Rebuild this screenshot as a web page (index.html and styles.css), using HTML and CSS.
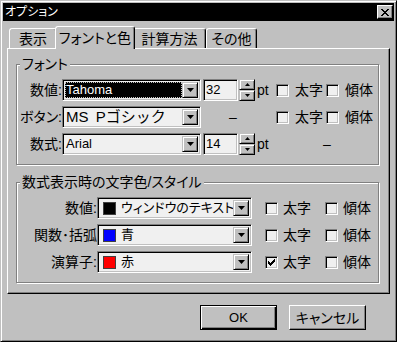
FILE: index.html
```html
<!DOCTYPE html>
<html lang="ja">
<head>
    <meta charset="UTF-8">
    <title>オプション</title>
    <link rel="stylesheet" href="styles.css">
</head>
<body>

<div class="window">
    <div class="titlebar">
        <span class="titlebar__text">オプション</span>
        <button class="titlebar__close" aria-label="閉じる">
            <svg width="8" height="7" viewBox="0 0 8 7" shape-rendering="crispEdges">
                <path d="M0 0h2v1h-2zM6 0h2v1h-2zM1 1h2v1h-2zM5 1h2v1h-2zM2 2h4v1h-4zM3 3h2v1h-2zM2 4h4v1h-4zM1 5h2v1h-2zM5 5h2v1h-2zM0 6h2v1h-2zM6 6h2v1h-2z" fill="#000"/>
            </svg>
        </button>
    </div>

    <div class="dialog">
        <!-- Tabs -->
        <div class="tabs">
            <div class="tab tab--show">表示</div>
            <div class="tab tab--active">フォントと色</div>
            <div class="tab tab--calc">計算方法</div>
            <div class="tab tab--other">その他</div>
        </div>

        <div class="panel">
            <!-- Font group -->
            <fieldset class="group">
                <legend class="group__title">フォント</legend>
                <div class="font-grid">
                    <span class="label">数値:</span>
                    <div class="combo">
                        <span class="combo__value combo__value--focus">Tahoma</span>
                        <span class="combo__arrow"><svg width="7" height="4" viewBox="0 0 7 4"><path d="M0 0h7L3.5 4z"/></svg></span>
                    </div>
                    <div class="spin">
                        <div class="edit">32</div>
                        <div class="spin__buttons">
                            <span class="spin__btn"><svg width="5" height="3" viewBox="0 0 5 3"><path d="M2.5 0L5 3H0z"/></svg></span>
                            <span class="spin__btn"><svg width="5" height="3" viewBox="0 0 5 3"><path d="M0 0h5L2.5 3z"/></svg></span>
                        </div>
                        <span class="unit">pt</span>
                    </div>
                    <label class="check"><span class="check__box"></span>太字</label>
                    <label class="check"><span class="check__box"></span>傾体</label>

                    <span class="label">ボタン:</span>
                    <div class="combo">
                        <span class="combo__value combo__value--wide">MS Pゴシック</span>
                        <span class="combo__arrow"><svg width="7" height="4" viewBox="0 0 7 4"><path d="M0 0h7L3.5 4z"/></svg></span>
                    </div>
                    <span class="dash dash--size">–</span>
                    <label class="check"><span class="check__box"></span>太字</label>
                    <label class="check"><span class="check__box"></span>傾体</label>

                    <span class="label">数式:</span>
                    <div class="combo">
                        <span class="combo__value">Arial</span>
                        <span class="combo__arrow"><svg width="7" height="4" viewBox="0 0 7 4"><path d="M0 0h7L3.5 4z"/></svg></span>
                    </div>
                    <div class="spin">
                        <div class="edit">14</div>
                        <div class="spin__buttons">
                            <span class="spin__btn"><svg width="5" height="3" viewBox="0 0 5 3"><path d="M2.5 0L5 3H0z"/></svg></span>
                            <span class="spin__btn"><svg width="5" height="3" viewBox="0 0 5 3"><path d="M0 0h5L2.5 3z"/></svg></span>
                        </div>
                        <span class="unit">pt</span>
                    </div>
                    <span class="dash dash--style">–</span>
                </div>
            </fieldset>

            <!-- Color / style group -->
            <fieldset class="group group--colors">
                <legend class="group__title">数式表示時の文字色/スタイル</legend>
                <div class="color-grid">
                    <span class="label">数値:</span>
                    <div class="combo">
                        <span class="combo__value"><span class="swatch" style="background: #000000;"></span>ウィンドウのテキスト</span>
                        <span class="combo__arrow"><svg width="7" height="4" viewBox="0 0 7 4"><path d="M0 0h7L3.5 4z"/></svg></span>
                    </div>
                    <label class="check check--first"><span class="check__box"></span>太字</label>
                    <label class="check"><span class="check__box"></span>傾体</label>

                    <span class="label">関数･括弧</span>
                    <div class="combo">
                        <span class="combo__value"><span class="swatch" style="background: #0000ff;"></span>青</span>
                        <span class="combo__arrow"><svg width="7" height="4" viewBox="0 0 7 4"><path d="M0 0h7L3.5 4z"/></svg></span>
                    </div>
                    <label class="check check--first"><span class="check__box"></span>太字</label>
                    <label class="check"><span class="check__box"></span>傾体</label>

                    <span class="label">演算子:</span>
                    <div class="combo">
                        <span class="combo__value"><span class="swatch" style="background: #ff0000;"></span>赤</span>
                        <span class="combo__arrow"><svg width="7" height="4" viewBox="0 0 7 4"><path d="M0 0h7L3.5 4z"/></svg></span>
                    </div>
                    <label class="check check--first">
                        <span class="check__box">
                            <svg width="7" height="7" viewBox="0 0 7 7" shape-rendering="crispEdges"><path d="M6 0h1v3h-1zM5 1h1v3h-1zM4 2h1v3h-1zM3 3h1v3h-1zM2 4h1v3h-1zM1 3h1v3h-1zM0 2h1v3h-1z"/></svg>
                        </span>太字
                    </label>
                    <label class="check"><span class="check__box"></span>傾体</label>
                </div>
            </fieldset>
        </div>

        <div class="buttons">
            <button class="button button--default">OK</button>
            <button class="button">キャンセル</button>
        </div>
    </div>
</div>

</body>
</html>
```

FILE: styles.css
```css
/* General styles */
* {
    box-sizing: border-box;
}
body {
    margin: 0;
    background: #c0c0c0;
    font-family: "Liberation Sans", "Noto Sans CJK JP", sans-serif;
    font-size: 14px;
    line-height: 16px;
    color: #000;
    font-feature-settings: "palt";
}
button {
    font: inherit;
    color: inherit;
}

/* Window frame */
.window {
    width: 397px;
    height: 342px;
    background: #c0c0c0;
    border: 1px solid;
    border-color: #c0c0c0 #000 #000 #c0c0c0;
    box-shadow: inset 1px 1px #fff, inset -1px -1px #808080;
    padding: 2px;
    display: flex;
    flex-direction: column;
}
.titlebar {
    height: 18px;
    flex: none;
    background: #000;
    color: #fff;
    display: flex;
    align-items: center;
    justify-content: space-between;
    padding: 0 1px 0 2px;
    font-size: 12px;
}
.titlebar__close {
    width: 16px;
    height: 14px;
    padding: 0;
    background: #c0c0c0;
    border: 1px solid;
    border-color: #fff #000 #000 #fff;
    box-shadow: inset -1px -1px #808080;
    display: flex;
    align-items: center;
    justify-content: center;
}
.titlebar__close svg {
    display: block;
}

/* Dialog body */
.dialog {
    flex: 1;
    padding: 5px 4px 0;
    display: flex;
    flex-direction: column;
}

/* Tabs */
.tabs {
    display: flex;
    align-items: flex-start;
    height: 22px;
    padding-left: 2px;
}
.tab {
    height: 20px;
    margin-top: 2px;
    background: #c0c0c0;
    border: 1px solid;
    border-bottom: none;
    border-color: #fff #000 transparent #fff;
    box-shadow: inset -1px 0 #808080;
    border-radius: 3px 3px 0 0;
    text-align: center;
    padding-top: 2px;
}
.tab--show {
    width: 48px;
}
.tab--active {
    width: 80px;
    height: 23px;
    margin: 0 -2px;
    padding-top: 3px;
    position: relative;
    z-index: 1;
}
.tab--calc {
    width: 73px;
}
.tab--other {
    width: 51px;
}

.panel {
    height: 246px;
    border: 1px solid;
    border-color: #fff #000 #000 #fff;
    box-shadow: inset -1px -1px #808080;
    padding: 7px 0 0 8px;
}

/* Group boxes */
.group {
    width: 363px;
    margin: 0;
    padding: 7px 0 9px;
    border: 1px solid #808080;
    box-shadow: inset 1px 1px #fff, 1px 1px #fff;
    min-inline-size: 0;
}
.group--colors {
    margin-top: 9px;
}
.group__title {
    margin-left: 3px;
    padding: 0 2px;
    background: #c0c0c0;
    line-height: 16px;
}

.font-grid {
    display: grid;
    grid-template-columns: 45px 139px 75px 50px 1fr;
    grid-auto-rows: 22px;
    row-gap: 5px;
    align-items: center;
}
.color-grid {
    display: grid;
    grid-template-columns: 80px 155px 73px 1fr;
    grid-auto-rows: 22px;
    row-gap: 5px;
    align-items: center;
}
.label {
    text-align: right;
    white-space: nowrap;
}

/* Combo box */
.combo {
    height: 22px;
    display: flex;
    padding: 2px;
    background: #f0f0f0;
    border: 1px solid;
    border-color: #808080 #fff #fff #808080;
    box-shadow: inset 1px 1px #000, inset -1px -1px #c0c0c0;
}
.combo__value {
    flex: 1;
    display: flex;
    align-items: center;
    padding-left: 1px;
    font-size: 13px;
    white-space: nowrap;
    overflow: hidden;
}
.combo__value--focus {
    background: #000;
    color: #fff;
    border: 1px dotted #c0c0c0;
    padding-left: 0;
}
.combo__value--wide {
    font-size: 15px;
    font-feature-settings: normal;
    word-spacing: 3px;
}
.combo__arrow {
    width: 16px;
    flex: none;
    background: #c0c0c0;
    border: 1px solid;
    border-color: #c0c0c0 #000 #000 #c0c0c0;
    box-shadow: inset 1px 1px #fff, inset -1px -1px #808080;
    display: flex;
    align-items: center;
    justify-content: center;
}
.combo__arrow svg {
    display: block;
}
.swatch {
    width: 13px;
    height: 13px;
    flex: none;
    margin: 0 5px 0 2px;
    border: 1px solid #404040;
}

/* Spin edit */
.spin {
    display: flex;
    align-items: center;
    margin-left: 2px;
}
.edit {
    width: 35px;
    height: 22px;
    padding: 2px 0 0 2px;
    background: #f0f0f0;
    border: 1px solid;
    border-color: #808080 #fff #fff #808080;
    box-shadow: inset 1px 1px #000, inset -1px -1px #c0c0c0;
    font-size: 13px;
}
.spin__buttons {
    display: flex;
    flex-direction: column;
    width: 16px;
    height: 22px;
    margin-left: 1px;
}
.spin__btn {
    flex: 1;
    background: #c0c0c0;
    border: 1px solid;
    border-color: #c0c0c0 #000 #000 #c0c0c0;
    box-shadow: inset 1px 1px #fff, inset -1px -1px #808080;
    display: flex;
    align-items: center;
    justify-content: center;
}
.spin__btn svg {
    display: block;
}
.unit {
    margin-left: 2px;
}
.dash {
    justify-self: start;
}
.dash--size {
    margin-left: 28px;
}
.dash--style {
    grid-column: 4 / 6;
    margin-left: 47px;
}

/* Check boxes */
.check {
    display: flex;
    align-items: center;
    gap: 6px;
    white-space: nowrap;
}
.check--first {
    margin-left: 13px;
}
.color-grid .check {
    gap: 5px;
}
.check__box {
    width: 13px;
    height: 13px;
    flex: none;
    background: #f0f0f0;
    border: 1px solid;
    border-color: #808080 #fff #fff #808080;
    box-shadow: inset 1px 1px #000, inset -1px -1px #c0c0c0;
    display: flex;
    align-items: center;
    justify-content: center;
}
.check__box svg {
    display: block;
}

/* Dialog buttons */
.buttons {
    display: flex;
    justify-content: flex-end;
    gap: 12px;
    padding: 11px 24px 0 0;
}
.button {
    width: 77px;
    height: 25px;
    padding: 0;
    background: #c0c0c0;
    border: 1px solid;
    border-color: #fff #000 #000 #fff;
    box-shadow: inset -1px -1px #808080;
}
.button--default {
    border-color: #000;
    font-size: 13px;
    box-shadow: inset 1px 1px #fff, inset -1px -1px #000, inset -2px -2px #808080;
}
```
